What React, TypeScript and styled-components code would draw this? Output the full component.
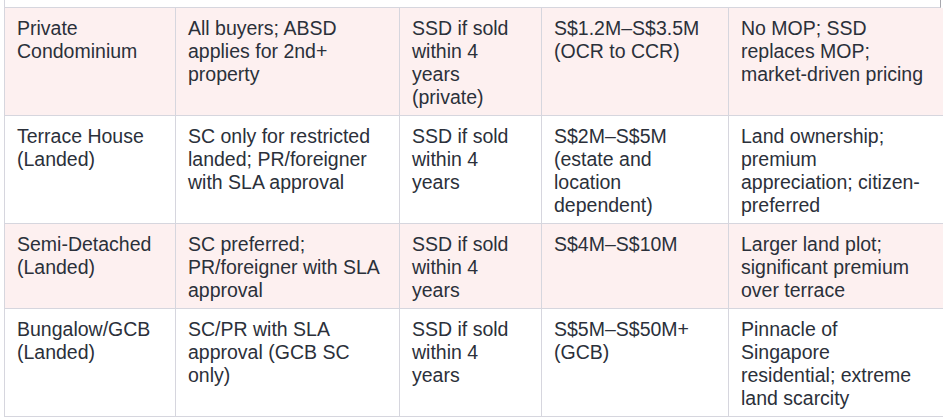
import React from "react";
import styled, { createGlobalStyle } from "styled-components";

const Global = createGlobalStyle`
  html, body { margin: 0; padding: 0; background: #ffffff; overflow: hidden; }
  body { font-family: "Liberation Sans", Arial, sans-serif; }
`;

const Page = styled.div`
  padding-left: 4px;
  width: 939px;
`;

const TopStrip = styled.div`
  height: 7px;
  width: 935px;
  border-left: 1px solid #d6d6de;
  border-right: 1px solid #a8a8ae;
  border-bottom: 1px solid #d6d6de;
`;

const Table = styled.div`
  border-left: 1px solid #d6d6de;
`;

const Row = styled.div<{ $alt?: boolean }>`
  display: grid;
  grid-template-columns: 171px 224px 142px 187px 213px;
  background: ${(p) => (p.$alt ? "#fdf0f0" : "#ffffff")};
  border-bottom: 1px solid #d6d6de;
`;

const Cell = styled.div<{ $last?: boolean }>`
  padding: 9px 13px 6px 12px;
  font-size: 19.5px;
  line-height: 23px;
  color: #2b303a;
  border-right: ${(p) => (p.$last ? "none" : "1px solid #d6d6de")};
`;

const rows: string[][] = [
  [
    "Private Condominium",
    "All buyers; ABSD applies for 2nd+ property",
    "SSD if sold within 4 years (private)",
    "S$1.2M–S$3.5M (OCR to CCR)",
    "No MOP; SSD replaces MOP; market-driven pricing",
  ],
  [
    "Terrace House (Landed)",
    "SC only for restricted landed; PR/foreigner with SLA approval",
    "SSD if sold within 4 years",
    "S$2M–S$5M (estate and location dependent)",
    "Land ownership; premium appreciation; citizen-preferred",
  ],
  [
    "Semi-Detached (Landed)",
    "SC preferred; PR/foreigner with SLA approval",
    "SSD if sold within 4 years",
    "S$4M–S$10M",
    "Larger land plot; significant premium over terrace",
  ],
  [
    "Bungalow/GCB (Landed)",
    "SC/PR with SLA approval (GCB SC only)",
    "SSD if sold within 4 years",
    "S$5M–S$50M+ (GCB)",
    "Pinnacle of Singapore residential; extreme land scarcity",
  ],
];

export default function App() {
  return (
    <>
      <Global />
      <Page>
        <TopStrip />
        <Table>
          {rows.map((r, i) => (
            <Row key={i} $alt={i % 2 === 0}>
              {r.map((c, j) => (
                <Cell key={j} $last={j === r.length - 1}>
                  {c}
                </Cell>
              ))}
            </Row>
          ))}
        </Table>
      </Page>
    </>
  );
}
